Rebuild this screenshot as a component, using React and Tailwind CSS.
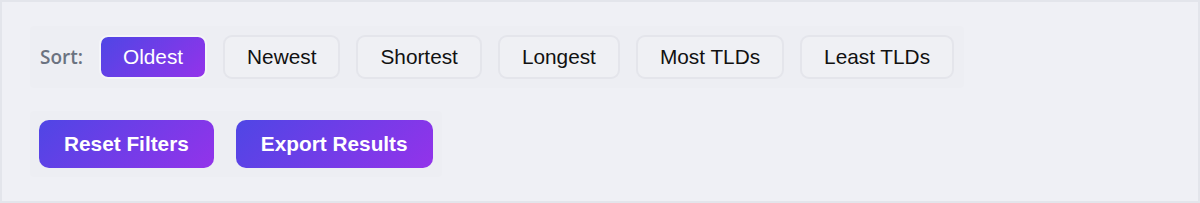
import React from "react";

const sorts = ["Oldest", "Newest", "Shortest", "Longest", "Most TLDs", "Least TLDs"];

export default function App() {
  return (
    <div className="w-[1200px] h-[203px] border-2 border-[#e3e5eb] bg-[#eff0f5] pt-[24px] pl-[28px] flex flex-col items-start gap-[23px]" style={{ fontFamily: '"Liberation Sans", Arial, sans-serif' }}>
      <div className="flex items-center gap-[16px] bg-[#edeef3] px-[10px] py-[9px] rounded-[4px]">
        <span className="text-[19px] font-semibold text-[#6b7280]" style={{ fontFamily: '"Open Sans", sans-serif' }}>Sort:</span>
        {sorts.map((s, i) =>
          i === 0 ? (
            <button key={s} className="h-[44px] px-[22px] rounded-[9px] border-2 border-white/40 bg-clip-padding bg-[linear-gradient(135deg,#4f46e5,#9333ea)] text-white text-[20.8px] leading-none">
              {s}
            </button>
          ) : (
            <button key={s} className="h-[44px] px-[22px] rounded-[9px] border-2 border-[#e4e5eb] bg-[#eff0f4] text-[#111] text-[20.8px] leading-none">
              {s}
            </button>
          )
        )}
      </div>
      <div className="flex items-center gap-[22px] bg-[#edeef3] px-[9px] py-[9px] rounded-[4px]">
        <button className="h-[48px] px-[25px] rounded-[10px] bg-[linear-gradient(135deg,#4f46e5,#9333ea)] text-white font-bold text-[20.8px] leading-none">
          Reset Filters
        </button>
        <button className="h-[48px] px-[25px] rounded-[10px] bg-[linear-gradient(135deg,#4f46e5,#9333ea)] text-white font-bold text-[20.8px] leading-none">
          Export Results
        </button>
      </div>
    </div>
  );
}
